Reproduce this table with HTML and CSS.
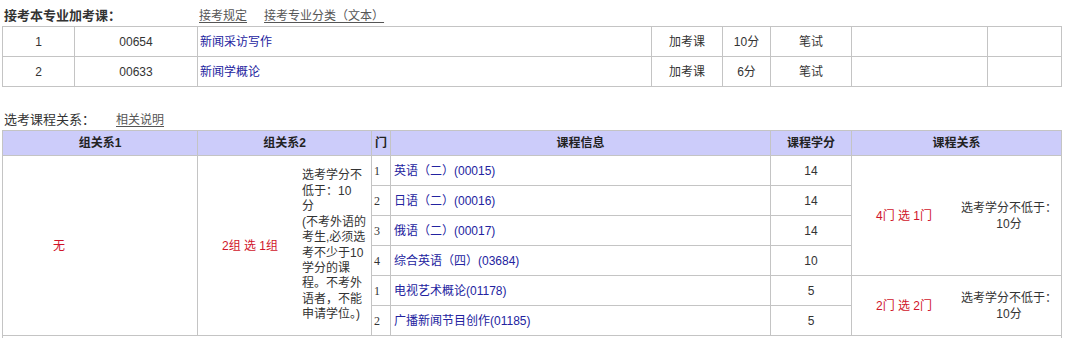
FILE: index.html
```html
<!DOCTYPE html>
<html lang="zh-CN">
<head>
<meta charset="utf-8">
<title>接考本专业加考课</title>
<link rel="stylesheet" href="styles.css">
</head>
<body>
<div class="page">
  <div class="sec-head first">
    <span class="sec-title bold">接考本专业加考课：</span>
    <a class="sec-link l1" href="#">接考规定</a>
    <a class="sec-link" href="#">接考专业分类（文本）</a>
  </div>
  <table class="grid t1">
    <colgroup>
      <col class="c72"><col class="c123"><col class="c454"><col class="c71"><col class="c48"><col class="c81"><col class="c136"><col class="c74">
    </colgroup>
    <tr>
      <td class="ctr">1</td><td class="ctr">00654</td><td class="lft"><a class="course" href="#">新闻采访写作</a></td>
      <td class="ctr">加考课</td><td class="ctr">10分</td><td class="ctr">笔试</td><td></td><td></td>
    </tr>
    <tr>
      <td class="ctr">2</td><td class="ctr">00633</td><td class="lft"><a class="course" href="#">新闻学概论</a></td>
      <td class="ctr">加考课</td><td class="ctr">6分</td><td class="ctr">笔试</td><td></td><td></td>
    </tr>
  </table>

  <div class="sec-head second">
    <span class="sec-title">选考课程关系：</span>
    <a class="sec-link l2" href="#">相关说明</a>
  </div>
  <table class="grid t2">
    <colgroup>
      <col class="c195"><col class="c174"><col class="c19"><col class="c380"><col class="c81"><col class="c210">
    </colgroup>
    <tr class="hdr">
      <th>组关系1</th><th>组关系2</th><th>门</th><th>课程信息</th><th>课程学分</th><th>课程关系</th>
    </tr>
    <tr>
      <td rowspan="6" class="span">
        <div class="g1"><span class="red g1-main">无</span><span class="g1-rest"></span></div>
      </td>
      <td rowspan="6" class="span">
        <div class="g2">
          <span class="red g2-main">2组 选 1组</span>
          <span class="g2-note">
            <span class="note-line">选考学分不低于：10<br>分</span>
            <span class="note-line">(不考外语的考生,必须选考不少于10学分的课程。不考外语者，不能申请学位。)</span>
          </span>
        </div>
      </td>
      <td class="num">1</td>
      <td class="lft info"><a class="course" href="#">英语（二）(00015)</a></td>
      <td class="ctr">14</td>
      <td rowspan="4" class="span">
        <div class="rel"><span class="red rel-main">4门 选 1门</span><span class="rel-note">选考学分不低于：10分</span></div>
      </td>
    </tr>
    <tr>
      <td class="num">2</td>
      <td class="lft info"><a class="course" href="#">日语（二）(00016)</a></td>
      <td class="ctr">14</td>
    </tr>
    <tr>
      <td class="num">3</td>
      <td class="lft info"><a class="course" href="#">俄语（二）(00017)</a></td>
      <td class="ctr">14</td>
    </tr>
    <tr>
      <td class="num">4</td>
      <td class="lft info"><a class="course" href="#">综合英语（四）(03684)</a></td>
      <td class="ctr">10</td>
    </tr>
    <tr>
      <td class="num">1</td>
      <td class="lft info"><a class="course" href="#">电视艺术概论(01178)</a></td>
      <td class="ctr">5</td>
      <td rowspan="2" class="span">
        <div class="rel"><span class="red rel-main">2门 选 2门</span><span class="rel-note">选考学分不低于：10分</span></div>
      </td>
    </tr>
    <tr>
      <td class="num">2</td>
      <td class="lft info"><a class="course" href="#">广播新闻节目创作(01185)</a></td>
      <td class="ctr">5</td>
    </tr>
    <tr>
      <td colspan="6" class="tail"></td>
    </tr>
  </table>
</div>
</body>
</html>
```

FILE: styles.css
```css
html, body {
  margin: 0;
  padding: 0;
  background: #fff;
}
body {
  font-family: "Liberation Sans", "Noto Sans CJK SC", sans-serif;
  font-size: 12px;
  color: #333;
}
.page {
  padding: 0 0 0 2px;
}
.sec-head {
  display: flex;
  align-items: baseline;
  height: 16px;
  line-height: 16px;
}
.sec-head.first {
  padding-top: 8px;
  margin-bottom: 2px;
}
.sec-head.second {
  margin-top: 25px;
  margin-bottom: 2px;
}
.sec-title {
  font-size: 13px;
  color: #333;
  padding-left: 2px;
}
.sec-title.bold {
  font-weight: bold;
}
.sec-link {
  font-size: 12px;
  color: #555;
  text-decoration: underline;
  text-underline-offset: 2px;
  margin-left: 17px;
}
.sec-link.l1 {
  margin-left: 78px;
}
.sec-link.l2 {
  margin-left: 21px;
}
.grid {
  border-collapse: collapse;
  table-layout: fixed;
  width: 1060px;
}
.grid td, .grid th {
  border: 1px solid #c4c4c4;
  padding: 0;
  line-height: 16px;
}
.t1 td {
  height: 29px;
}
.ctr { text-align: center; }
.lft { text-align: left; padding-left: 2px !important; }
.course {
  color: #2323a0;
  text-decoration: none;
}
.c72 { width: 72px; }
.c123 { width: 123px; }
.c454 { width: 454px; }
.c71 { width: 71px; }
.c48 { width: 48px; }
.c81 { width: 81px; }
.c136 { width: 136px; }
.c74 { width: 74px; }
.c195 { width: 195px; }
.c174 { width: 174px; }
.c19 { width: 19px; }
.c380 { width: 380px; }
.c210 { width: 210px; }

.hdr th {
  background: #ccccfa;
  height: 24px;
  font-weight: bold;
  color: #222;
  text-align: center;
}
.t2 td {
  height: 29px;
}
.num {
  font-family: "Liberation Serif", "Noto Sans CJK SC", serif;
  font-size: 12px;
  padding-left: 2px !important;
  text-align: left;
}
.info {
  padding-left: 3px !important;
}
.red {
  color: #d0142a;
}
.span {
  vertical-align: middle;
}
.g1 {
  display: flex;
  align-items: center;
}
.g1-main {
  width: 112px;
  text-align: center;
}
.g1-rest {
  flex: 1;
}
.g2 {
  display: flex;
  align-items: center;
}
.g2-main {
  flex: 1;
  text-align: center;
}
.g2-note {
  display: flex;
  flex-direction: column;
  width: 67px;
  margin-right: 2px;
  line-height: 15.4px;
  word-break: break-all;
}
.note-line {
  display: block;
}
.rel {
  display: flex;
  align-items: center;
}
.rel-main {
  width: 104px;
  text-align: center;
}
.rel-note {
  width: 100px;
  text-align: center;
  margin-right: 2px;
  margin-left: auto;
}
.tail {
  height: 29px;
}
```
